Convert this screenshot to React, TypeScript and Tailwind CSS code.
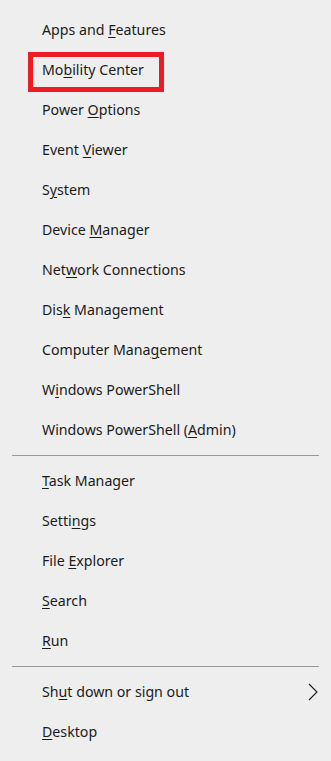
import React from "react";

type Item = { pre: string; key: string; post: string; highlight?: boolean; arrow?: boolean };

const group1: Item[] = [
  { pre: "Apps and ", key: "F", post: "eatures" },
  { pre: "Mo", key: "b", post: "ility Center", highlight: true },
  { pre: "Power ", key: "O", post: "ptions" },
  { pre: "Event ", key: "V", post: "iewer" },
  { pre: "S", key: "y", post: "stem" },
  { pre: "Device ", key: "M", post: "anager" },
  { pre: "Net", key: "w", post: "ork Connections" },
  { pre: "Dis", key: "k", post: " Management" },
  { pre: "Computer Mana", key: "g", post: "ement" },
  { pre: "W", key: "i", post: "ndows PowerShell" },
  { pre: "Windows PowerShell (", key: "A", post: "dmin)" },
];

const group2: Item[] = [
  { pre: "", key: "T", post: "ask Manager" },
  { pre: "Setti", key: "n", post: "gs" },
  { pre: "File ", key: "E", post: "xplorer" },
  { pre: "", key: "S", post: "earch" },
  { pre: "", key: "R", post: "un" },
];

const group3: Item[] = [
  { pre: "Sh", key: "u", post: "t down or sign out", arrow: true },
  { pre: "", key: "D", post: "esktop" },
];

function Row({ item }: { item: Item }) {
  return (
    <div className="relative flex h-[40px] items-center pb-[1px] pl-[42px] pr-[12px]">
      {item.highlight && (
        <div className="pointer-events-none absolute left-[28px] top-[1px] h-[40px] w-[136px] border-[5px] border-[#ed1c24]" />
      )}
      <span className="flex-1 whitespace-pre text-[14.2px] leading-none text-[#1b1b1b]">
        {item.pre}
        <span className="underline decoration-[1px] underline-offset-[2px]">{item.key}</span>
        {item.post}
      </span>
      {item.arrow && (
        <svg width="12" height="18" viewBox="0 0 12 18" className="mb-[1px]">
          <path d="M2 1 L10 9 L2 17" fill="none" stroke="#1b1b1b" strokeWidth="1.1" />
        </svg>
      )}
    </div>
  );
}

function Sep() {
  return (
    <div className="px-[12px] pb-[6px] pt-[4px]">
      <div className="h-px bg-[#999999]" />
    </div>
  );
}

export default function App() {
  return (
    <div
      className="h-[761px] w-[331px] bg-[#eeeeee] pt-[11px]"
      style={{ fontFamily: '"Noto Sans", "Open Sans", sans-serif' }}
    >
      {group1.map((it, i) => (
        <Row key={i} item={it} />
      ))}
      <Sep />
      {group2.map((it, i) => (
        <Row key={i} item={it} />
      ))}
      <Sep />
      {group3.map((it, i) => (
        <Row key={i} item={it} />
      ))}
    </div>
  );
}
